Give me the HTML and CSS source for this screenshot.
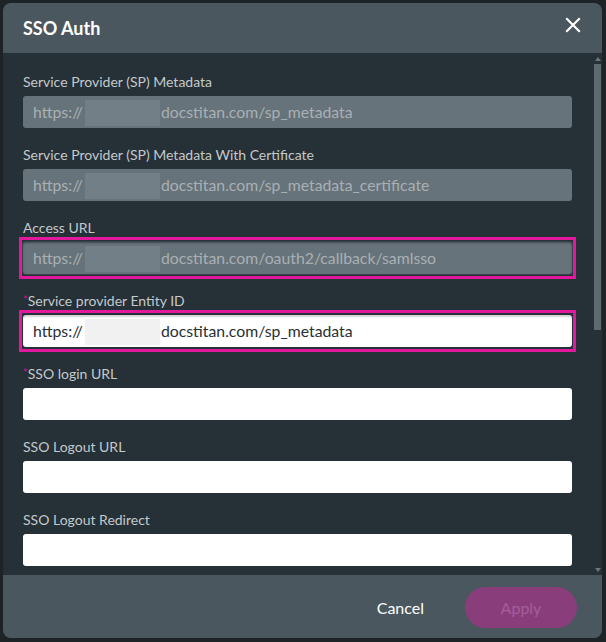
FILE: index.html
```html
<!DOCTYPE html>
<html lang="en">
<head>
<meta charset="utf-8">
<title>SSO Auth</title>
<link rel="stylesheet" href="styles.css">
</head>
<body>
<div class="modal">
  <div class="header">
    <h1 class="title">SSO Auth</h1>
    <svg class="close" width="16" height="16" viewBox="0 0 16 16" aria-label="Close"><path d="M2 2 L14 14 M14 2 L2 14" stroke="#ffffff" stroke-width="2.2" stroke-linecap="square"/></svg>
  </div>
  <div class="body">
    <div class="content">
      <div class="group">
        <div class="label">Service Provider (SP) Metadata</div>
        <div class="field readonly">https://<span class="redact"></span>docstitan.com/sp_metadata</div>
      </div>
      <div class="group">
        <div class="label">Service Provider (SP) Metadata With Certificate</div>
        <div class="field readonly">https://<span class="redact"></span>docstitan.com/sp_metadata_certificate</div>
      </div>
      <div class="group">
        <div class="label">Access URL</div>
        <div class="hl">
          <div class="field readonly shadowed">https://<span class="redact"></span>docstitan.com/oauth2/callback/samlsso</div>
        </div>
      </div>
      <div class="group">
        <div class="label"><span class="req">*</span>Service provider Entity ID</div>
        <div class="hl">
          <div class="field editable focused">https://<span class="redact"></span>docstitan.com/sp_metadata</div>
        </div>
      </div>
      <div class="group">
        <div class="label"><span class="req">*</span>SSO login URL</div>
        <div class="field editable"></div>
      </div>
      <div class="group">
        <div class="label">SSO Logout URL</div>
        <div class="field editable"></div>
      </div>
      <div class="group">
        <div class="label">SSO Logout Redirect</div>
        <div class="field editable"></div>
      </div>
    </div>
    <div class="scrollbar">
      <span class="arrow up"></span>
      <span class="thumb"></span>
      <span class="spacer"></span>
      <span class="arrow down"></span>
    </div>
  </div>
  <div class="footer">
    <button class="btn cancel">Cancel</button>
    <button class="btn apply">Apply</button>
  </div>
</div>
</body>
</html>
```

FILE: styles.css
```css
html, body {
  margin: 0;
  padding: 0;
}
body {
  background: #1d2327;
  padding: 3px 4px 4px 3px;
  font-family: Lato, "Open Sans", "Liberation Sans", sans-serif;
}
.modal {
  width: 599px;
  height: 635px;
  border-radius: 8px;
  overflow: hidden;
  background: #263037;
  display: flex;
  flex-direction: column;
}
.header {
  height: 50px;
  flex: none;
  background: #4a575e;
  display: flex;
  align-items: center;
  justify-content: space-between;
  padding: 0 21px 0 20px;
}
.title {
  margin: 0;
  font-size: 18px;
  font-weight: 700;
  color: #ffffff;
  line-height: 22px;
}
.close {
  display: block;
  margin-top: -7px;
}
.body {
  flex: 1;
  display: flex;
  overflow: hidden;
  min-height: 0;
}
.content {
  width: 549px;
  margin-left: 20px;
  padding-top: 21px;
  display: flex;
  flex-direction: column;
  gap: 19px;
}
.group {
  display: flex;
  flex-direction: column;
  gap: 6px;
}
.label {
  font-size: 14px;
  line-height: 16px;
  height: 16px;
  color: #c3c9cc;
}
.req {
  color: #c8198a;
  font-size: 11px;
  line-height: 0;
  vertical-align: 2px;
}
.field {
  height: 32px;
  box-sizing: border-box;
  border-radius: 3px;
  padding: 0 10px;
  font-size: 15.8px;
  line-height: 32px;
  white-space: nowrap;
  display: flex;
  align-items: center;
}
.field.readonly {
  background: #67737a;
  color: #a8b0b4;
}
.field.editable {
  background: #ffffff;
  color: #2a3034;
}
.redact {
  display: inline-block;
  width: 75px;
  height: 26px;
  margin: 2px 1px 0 2px;
}
.readonly .redact {
  background: #737f86;
}
.editable .redact {
  background: #f1f1f1;
}
.hl {
  border: 3px solid #e2189d;
  padding: 2px 1px;
  margin: -5px -4px;
}
.shadowed {
  box-shadow: 0 0 0 1px #39454b, inset 0 1px 2px rgba(0, 0, 0, 0.35);
}
.focused {
  box-shadow: inset 0 2px 2px rgba(0, 0, 0, 0.18);
}
.scrollbar {
  width: 7px;
  margin-left: 22px;
  padding: 4px 0 3px;
  display: flex;
  flex-direction: column;
  align-items: center;
}
.arrow {
  width: 0;
  height: 0;
  border-left: 3px solid transparent;
  border-right: 3px solid transparent;
}
.arrow.up {
  border-bottom: 4px solid #6b777d;
}
.arrow.down {
  border-top: 4px solid #6b777d;
}
.thumb {
  width: 7px;
  height: 266px;
  margin-top: 3px;
  background: #5d6a70;
}
.spacer {
  flex: 1;
}
.footer {
  height: 63px;
  flex: none;
  background: #4a575e;
  display: flex;
  align-items: center;
  justify-content: flex-end;
  padding: 0 25px 0 0;
  gap: 41px;
}
.btn {
  font-family: Lato, "Open Sans", "Liberation Sans", sans-serif;
  font-size: 16px;
  border: none;
  cursor: pointer;
}
.cancel {
  background: none;
  color: #ffffff;
  padding: 0;
  margin-top: 1px;
}
.apply {
  width: 112px;
  height: 41px;
  border-radius: 21px;
  background: #8a3d7b;
  color: #a45e9a;
  margin-top: 1px;
}
```
